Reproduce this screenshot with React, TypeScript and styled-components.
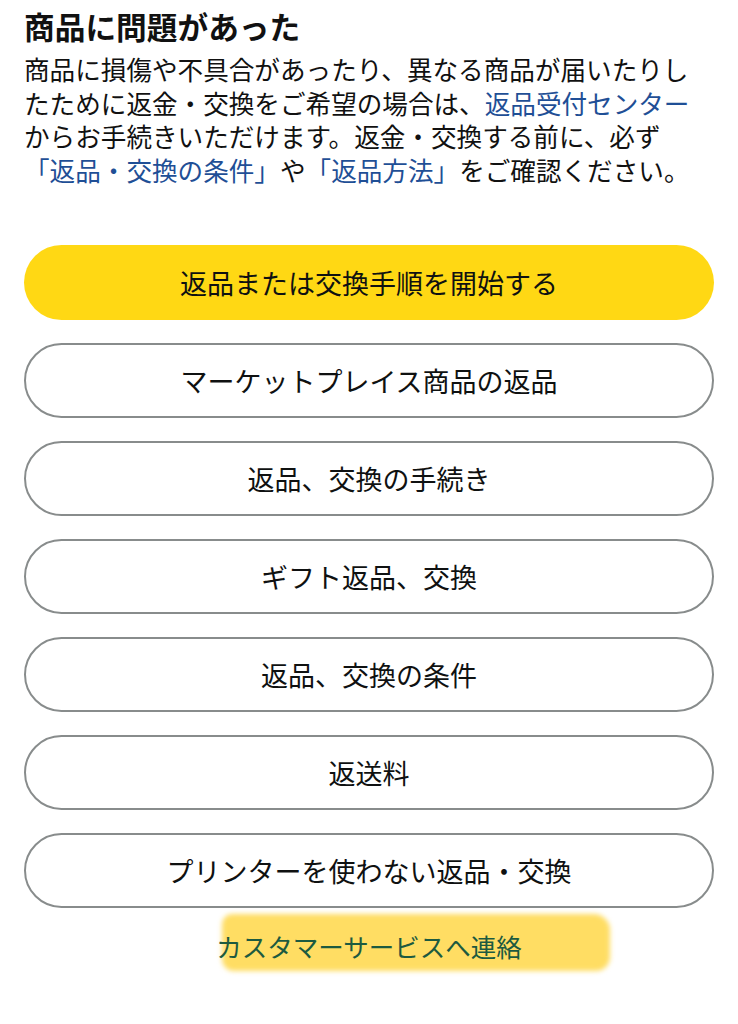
import React from "react";
import styled, { createGlobalStyle } from "styled-components";

const GlobalStyle = createGlobalStyle`
  body {
    margin: 0;
    background: #ffffff;
    font-family: "Noto Sans CJK JP", "Noto Sans", sans-serif;
    color: #0f1111;
  }
`;

const Page = styled.main`
  padding: 6px 24px 40px;
  width: 738px;
  box-sizing: border-box;
`;

const Title = styled.h1`
  margin: 0;
  font-size: 30.7px;
  line-height: 40px;
  font-weight: 700;
  color: #111;
`;

const Intro = styled.p`
  margin: 6px 0 0;
  font-size: 25.6px;
  line-height: 33.5px;
  color: #111;
  white-space: nowrap;
`;

const TextLink = styled.a`
  color: #1f4f96;
  text-decoration: none;
`;

const ButtonList = styled.div`
  margin-top: 59px;
  display: flex;
  flex-direction: column;
  gap: 23px;
`;

const PillButton = styled.button<{ $primary?: boolean }>`
  height: 75px;
  width: 100%;
  border-radius: 38px;
  border: ${(p) => (p.$primary ? "none" : "2px solid #888c8c")};
  background: ${(p) => (p.$primary ? "#ffd814" : "#ffffff")};
  font-family: inherit;
  font-size: 27px;
  color: #0f1111;
  display: flex;
  align-items: center;
  justify-content: center;
  cursor: pointer;
`;

const Footer = styled.div`
  margin-top: 21px;
  display: flex;
  justify-content: center;
`;

const Highlighted = styled.a`
  position: relative;
  font-size: 25.5px;
  line-height: 34px;
  color: #1c5a40;
  text-decoration: none;
  z-index: 0;
  &::before {
    content: "";
    position: absolute;
    left: 6px;
    right: -88px;
    top: -15px;
    bottom: -8px;
    background: rgba(255, 212, 60, 0.8);
    border-radius: 10px 16px 14px 12px;
    filter: blur(2.5px);
    z-index: -1;
  }
`;

const options = [
  "マーケットプレイス商品の返品",
  "返品、交換の手続き",
  "ギフト返品、交換",
  "返品、交換の条件",
  "返送料",
  "プリンターを使わない返品・交換",
];

export default function App() {
  return (
    <>
      <GlobalStyle />
      <Page>
        <Title>商品に問題があった</Title>
        <Intro>
          商品に損傷や不具合があったり、異なる商品が届いたりし
          <br />
          たために返金・交換をご希望の場合は、
          <TextLink href="#">返品受付センター</TextLink>
          <br />
          からお手続きいただけます。返金・交換する前に、必ず
          <br />
          <TextLink href="#">「返品・交換の条件」</TextLink>や
          <TextLink href="#">「返品方法」</TextLink>をご確認ください。
        </Intro>
        <ButtonList>
          <PillButton $primary>返品または交換手順を開始する</PillButton>
          {options.map((o) => (
            <PillButton key={o}>{o}</PillButton>
          ))}
        </ButtonList>
        <Footer>
          <Highlighted href="#">カスタマーサービスへ連絡</Highlighted>
        </Footer>
      </Page>
    </>
  );
}
